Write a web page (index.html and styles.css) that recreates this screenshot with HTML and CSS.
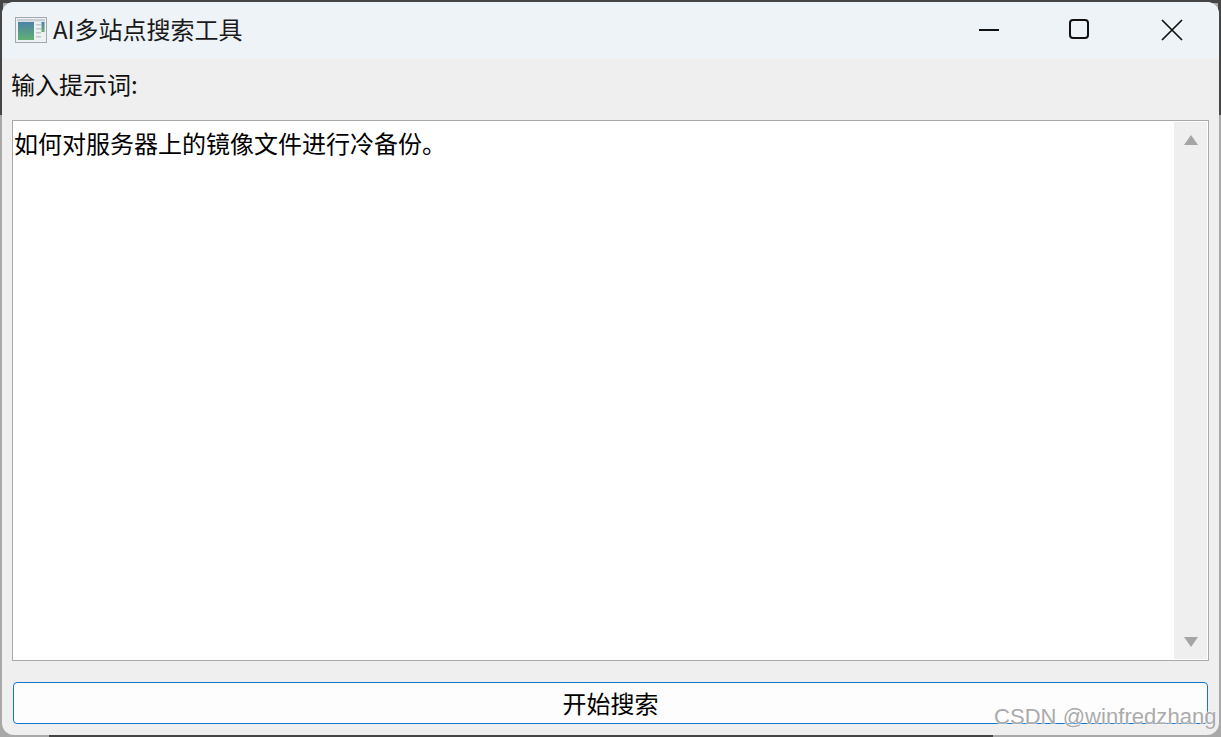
FILE: index.html
```html
<!DOCTYPE html>
<html lang="zh">
<head>
<meta charset="utf-8">
<title>AI多站点搜索工具</title>
<link rel="stylesheet" href="styles.css">
</head>
<body>
<div class="window">
  <header class="titlebar">
    <svg class="app-icon" width="32" height="26" viewBox="0 0 32 26">
      <defs>
        <linearGradient id="pane" x1="0" y1="0" x2="0" y2="1">
          <stop offset="0" stop-color="#4a82a8"/>
          <stop offset="1" stop-color="#62b070"/>
        </linearGradient>
      </defs>
      <rect x="0.5" y="0.5" width="31" height="25" fill="#eef1f3" stroke="#a3a8ac"/>
      <rect x="2" y="2" width="28" height="2.500" fill="#c6ced6"/>
      <rect x="3" y="5" width="16" height="18" fill="url(#pane)"/>
      <rect x="21" y="7" width="5" height="1.500" fill="#c3c8cc"/>
      <rect x="21" y="11" width="5" height="1.500" fill="#c3c8cc"/>
      <rect x="21" y="15" width="5" height="1.500" fill="#c3c8cc"/>
      <rect x="21" y="19" width="5" height="1.500" fill="#c3c8cc"/>
      <rect x="26.500" y="5" width="3" height="10" fill="url(#pane)"/>
    </svg>
    <span class="title-text">AI多站点搜索工具</span>
    <div class="controls">
      <svg class="ctl" width="90" height="56" viewBox="0 0 90 56"><path d="M35 29h20" stroke="#111" stroke-width="2" fill="none"/></svg>
      <svg class="ctl" width="90" height="56" viewBox="0 0 90 56"><rect x="36" y="19" width="18" height="18" rx="3" stroke="#111" stroke-width="2" fill="none"/></svg>
      <svg class="ctl" width="90" height="56" viewBox="0 0 90 56"><path d="M38 19l20 20M58 19l-20 20" stroke="#111" stroke-width="1.700" fill="none"/></svg>
    </div>
  </header>
  <main class="content">
    <label class="prompt-label">输入提示词:</label>
    <div class="textbox">
      <div class="text-value">如何对服务器上的镜像文件进行冷备份。</div>
      <div class="scrollbar">
        <span class="arrow up"></span>
        <span class="arrow down"></span>
      </div>
    </div>
    <button class="search-btn"><span class="btn-text">开始搜索</span></button>
  </main>
</div>
<div class="watermark">CSDN @winfredzhang</div>
</body>
</html>
```
FILE: styles.css
```css
* { box-sizing: border-box; }
html, body { height: 100%; }
body {
  margin: 0;
  padding: 2px;
  overflow: hidden;
  background:
    linear-gradient(#454545 0 3px, transparent 3px),
    linear-gradient(90deg, #454545 0 3px, transparent 3px 1218px, #454545 1218px) 0 0 / 100% 115px no-repeat,
    linear-gradient(90deg, #a8a8a8 0 49px, #444 49px 993px, #a8a8a8 993px);
  font-family: "Noto Sans CJK SC", "Noto Sans", sans-serif;
  color: #111;
}
.window {
  height: 733px;
  display: flex;
  flex-direction: column;
  border-radius: 12px;
  overflow: hidden;
  background: #efefef;
}
.titlebar {
  height: 56px;
  flex: none;
  display: flex;
  align-items: center;
  padding-left: 13px;
  background: #eef3f8;
}
.app-icon { flex: none; margin-right: 6px; }
.title-text { font-size: 24px; line-height: 32px; color: #1a1a1a; padding-bottom: 2px; }
.controls { margin-left: auto; display: flex; margin-right: 5px; padding-bottom: 2px; }
.ctl { display: block; }
.content {
  flex: 1;
  display: flex;
  flex-direction: column;
  padding: 0 10px 11px;
}
.prompt-label {
  height: 62px;
  font-size: 24px;
  line-height: 52px;
  margin-left: -1px;
  color: #111;
}
.textbox {
  height: 541px;
  flex: none;
  display: flex;
  background: #fff;
  border: 1px solid #a9a9a9;
}
.text-value {
  flex: 1;
  padding: 6px 1px;
  font-size: 24px;
  line-height: 32px;
  color: #000;
}
.scrollbar {
  width: 33px;
  margin: 1px;
  background: #efefef;
  display: flex;
  flex-direction: column;
  justify-content: space-between;
  align-items: center;
  padding: 13px 0 12px;
}
.arrow { width: 0; height: 0; border-left: 7px solid transparent; border-right: 7px solid transparent; }
.arrow.up { border-bottom: 10px solid #a5a5a5; }
.arrow.down { border-top: 10px solid #a5a5a5; }
.search-btn {
  margin: 21px 1px 0;
  height: 42px;
  flex: none;
  border: 1px solid #0f76d2;
  border-radius: 4px;
  background: #fdfdfd;
  font-family: inherit;
  font-size: 24px;
  line-height: 32px;
  padding: 0;
  color: #000;
}
.watermark {
  position: absolute;
  left: 994px;
  top: 702px;
  font-family: "Liberation Sans", sans-serif;
  font-size: 22px;
  letter-spacing: 0.05px;
  line-height: 30px;
  color: #ababab;
  text-shadow: 0 0 2px #fff, 0 0 2px #fff;
  white-space: nowrap;
}
```
